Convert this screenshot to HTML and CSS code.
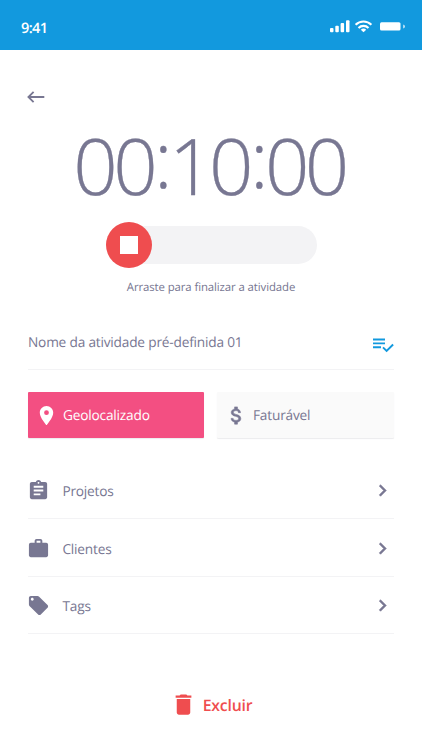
FILE: index.html
```html
<!DOCTYPE html>
<html lang="pt-BR">
<head>
    <meta charset="UTF-8">
    <meta name="viewport" content="width=device-width, initial-scale=1.0">
    <title>Atividade</title>
    <link rel="stylesheet" href="styles.css">
</head>
<body>
    <!-- Status bar -->
    <header class="status-bar">
        <span class="time">9:41</span>
        <svg class="status-icons" width="76" height="14" viewBox="0 0 76 14" fill="#fff">
            <rect x="0" y="8" width="3.5" height="4.3" rx="1"/>
            <rect x="5.3" y="5.8" width="3.5" height="6.5" rx="1"/>
            <rect x="10.6" y="3.1" width="3.5" height="9.2" rx="1"/>
            <rect x="16" y="0.3" width="3.5" height="12" rx="1"/>
            <g fill="none" stroke="#fff" stroke-width="2.1">
                <path d="M25.6 4.7a11.2 11.2 0 0 1 15.8 0"/>
                <path d="M28.5 7.9a7.1 7.1 0 0 1 10 0"/>
            </g>
            <path d="M33.5 12.3l-2.7-2.6a3.9 3.9 0 0 1 5.4 0z"/>
            <rect x="50" y="2.3" width="20.5" height="8.2" rx="1.5"/>
            <path d="M73.4 4.6c1.8.8 1.8 3.2 0 4z"/>
        </svg>
    </header>

    <main class="content">
        <a class="back" href="#" aria-label="Voltar">
            <svg width="18" height="12" viewBox="0 0 18 12" fill="none" stroke="#787792" stroke-width="1.8">
                <path d="M17.3 6H1.5M6.6 .8L1.4 6l5.2 5.2"/>
            </svg>
        </a>

        <div class="timer">00<span class="colon">:</span>10<span class="colon">:</span>00</div>

        <div class="slider">
            <button class="slider-handle" aria-label="Parar"><span class="stop"></span></button>
        </div>
        <p class="hint">Arraste para finalizar a atividade</p>

        <div class="activity">
            <span>Nome da atividade pré-definida 01</span>
            <svg width="21" height="15" viewBox="0 0 21 15" fill="none" stroke="#1299de" stroke-width="1.9">
                <path d="M0 1.5h12M0 5.4h12M0 9.3h8M10 9.4l3.6 3.6 6.5-6.5"/>
            </svg>
        </div>

        <div class="options">
            <button class="option option-active">
                <svg class="icon" viewBox="0 0 24 24"><path d="M12 2C8.13 2 5 5.13 5 9c0 5.25 7 13 7 13s7-7.75 7-13c0-3.87-3.13-7-7-7zm0 9.5a2.5 2.5 0 0 1 0-5 2.5 2.5 0 0 1 0 5z"/></svg>
                <span>Geolocalizado</span>
            </button>
            <button class="option">
                <svg class="icon bold" viewBox="0 0 24 24"><path d="M11.8 10.9c-2.27-.59-3-1.2-3-2.15 0-1.09 1.01-1.85 2.7-1.85 1.78 0 2.44.85 2.5 2.1h2.21c-.07-1.72-1.12-3.3-3.21-3.81V3h-3v2.16c-1.94.42-3.5 1.68-3.5 3.61 0 2.31 1.91 3.46 4.7 4.13 2.5.6 3 1.48 3 2.41 0 .69-.49 1.79-2.7 1.79-2.06 0-2.87-.92-2.98-2.1h-2.2c.12 2.19 1.76 3.42 3.68 3.83V21h3v-2.15c1.95-.37 3.5-1.5 3.5-3.55 0-2.84-2.43-3.81-4.7-4.4z"/></svg>
                <span>Faturável</span>
            </button>
        </div>

        <ul class="menu">
            <li>
                <svg class="icon" viewBox="0 0 24 24"><path d="M19 3h-4.18C14.4 1.84 13.3 1 12 1c-1.3 0-2.4.84-2.82 2H5c-1.1 0-2 .9-2 2v14c0 1.1.9 2 2 2h14c1.1 0 2-.9 2-2V5c0-1.1-.9-2-2-2zm-7 0c.55 0 1 .45 1 1s-.45 1-1 1-1-.45-1-1 .45-1 1-1zm2 14H7v-2h7v2zm3-4H7v-2h10v2zm0-4H7V7h10v2z"/></svg>
                <span>Projetos</span>
                <svg class="icon bold chevron" viewBox="0 0 24 24"><path d="M10 6L8.59 7.41 13.17 12l-4.58 4.59L10 18l6-6z"/></svg>
            </li>
            <li>
                <svg class="icon" viewBox="0 0 24 24"><path d="M20 6h-4V4c0-1.11-.89-2-2-2h-4c-1.11 0-2 .89-2 2v2H4c-1.11 0-1.99.89-1.99 2L2 19c0 1.11.89 2 2 2h16c1.11 0 2-.89 2-2V8c0-1.11-.89-2-2-2zm-6 0h-4V4h4v2z"/></svg>
                <span>Clientes</span>
                <svg class="icon bold chevron" viewBox="0 0 24 24"><path d="M10 6L8.59 7.41 13.17 12l-4.58 4.59L10 18l6-6z"/></svg>
            </li>
            <li>
                <svg class="icon" viewBox="0 0 24 24"><path d="M21.41 11.58l-9-9C12.05 2.22 11.55 2 11 2H4c-1.1 0-2 .9-2 2v7c0 .55.22 1.05.59 1.42l9 9c.36.36.86.58 1.41.58.55 0 1.05-.22 1.41-.59l7-7c.37-.36.59-.86.59-1.41 0-.55-.23-1.06-.59-1.42zM5.5 7C4.67 7 4 6.33 4 5.5S4.67 4 5.5 4 7 4.67 7 5.5 6.33 7 5.5 7z"/></svg>
                <span>Tags</span>
                <svg class="icon bold chevron" viewBox="0 0 24 24"><path d="M10 6L8.59 7.41 13.17 12l-4.58 4.59L10 18l6-6z"/></svg>
            </li>
        </ul>

        <button class="btn-delete">
            <svg width="27" height="27" viewBox="0 0 24 24" fill="#ef4d4f"><path d="M6 19c0 1.1.9 2 2 2h8c1.1 0 2-.9 2-2V7H6v12zM19 4h-3.5l-1-1h-5l-1 1H5v2h14V4z"/></svg>
            <span>Excluir</span>
        </button>
    </main>
</body>
</html>
```
FILE: styles.css
```css
* {
    box-sizing: border-box;
}
body {
    margin: 0;
    background-color: #fff;
    color: #787792;
    font-family: "Open Sans", sans-serif;
    font-size: 13.7px;
    letter-spacing: -0.2px;
    text-rendering: geometricPrecision;
}
button {
    border: 0;
    padding: 0;
    color: inherit;
    font: inherit;
    letter-spacing: inherit;
    text-rendering: inherit;
    cursor: pointer;
}
svg {
    display: block;
    flex: none;
}
.icon {
    width: 23px;
    height: 23px;
    fill: currentColor;
}
.bold {
    stroke: currentColor;
    stroke-width: 0.6;
}
.status-bar {
    display: flex;
    align-items: center;
    justify-content: space-between;
    height: 50px;
    padding: 5px 16px 0 21px;
    background-color: #1299de;
    color: #fff;
}
.time {
    padding-top: 1px;
    font-size: 14.5px;
    font-weight: 600;
    letter-spacing: -0.6px;
}
.status-icons {
    margin-bottom: 2px;
}
.content {
    display: flex;
    flex-direction: column;
    padding: 41px 28px 0 28px;
}
.back {
    width: 18px;
    margin-left: -1px;
}
.timer {
    height: 106px;
    margin-top: 9px;
    margin-left: -4px;
    font-size: 78px;
    font-weight: 300;
    line-height: 106px;
    letter-spacing: -4.6px;
    text-align: center;
    white-space: nowrap;
    -webkit-text-stroke: 0.3px #787792;
}
.colon {
    padding: 0 1px;
    line-height: 1;
    vertical-align: 7px;
}
.slider {
    display: flex;
    align-items: center;
    align-self: center;
    width: 211px;
    height: 38px;
    margin-top: 8px;
    border-radius: 19px;
    background-color: #f3f3f5;
}
.slider-handle {
    display: flex;
    align-items: center;
    justify-content: center;
    flex: none;
    width: 46px;
    height: 46px;
    border-radius: 50%;
    background-color: #ef4d4f;
}
.stop {
    width: 18px;
    height: 18px;
    background-color: #fff;
}
.hint {
    margin: 16px 0 0;
    font-size: 11.4px;
    letter-spacing: -0.1px;
    line-height: 16px;
    text-align: center;
}
.activity {
    display: flex;
    align-items: center;
    justify-content: space-between;
    height: 55px;
    margin-top: 19px;
    border-bottom: 1px solid #f3f3f5;
}
.activity svg {
    margin-top: 6px;
}
.options {
    display: grid;
    grid-template-columns: 176px 177px;
    gap: 13px;
    margin-top: 22px;
}
.option {
    display: flex;
    align-items: center;
    gap: 5px;
    height: 46px;
    padding-left: 7px;
    border-radius: 1px;
    background-color: #fafafa;
    box-shadow: 0 1px 1px #ececee;
}
.option span {
    padding-top: 1px;
}
.option:last-child {
    padding-left: 8px;
}
.option-active {
    background-color: #f34f82;
    color: #fff;
}
.menu {
    margin: 23px 0 0;
    padding: 0;
    list-style: none;
}
.menu li {
    display: flex;
    align-items: center;
    gap: 12px;
    height: 57.8px;
    padding-top: 2px;
    border-bottom: 1px solid #f3f3f5;
}
.menu li span {
    padding-top: 2px;
}
.menu li .icon:first-child {
    margin-left: -0.6px;
}
.chevron {
    margin-left: auto;
}
.btn-delete {
    display: flex;
    align-items: center;
    align-self: center;
    gap: 6px;
    margin-top: 57px;
    background: none;
    color: #ef4d4f;
    font-size: 15.8px;
    font-weight: 600;
}
```
